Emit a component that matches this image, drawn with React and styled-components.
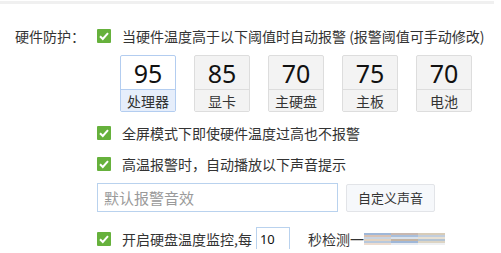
import React from 'react'
import styled, { createGlobalStyle } from 'styled-components'

const GlobalStyle = createGlobalStyle`
    body {
        margin: 0;
        background: #ffffff;
        font-family: "Noto Sans CJK SC", "Noto Sans", sans-serif;
        font-size: 14px;
        color: #333333;
    }
`

const thresholds = [
    { value: 95, name: '处理器', active: true },
    { value: 85, name: '显卡' },
    { value: 70, name: '主硬盘' },
    { value: 75, name: '主板' },
    { value: 70, name: '电池' },
]

const stripes = [
    ['#9fb7d8', '#d8c2b4', '#c9d4e2', '#e2d2c0', '#b8c8dc', '#ecdcd0'],
    ['#c8b8b0', '#a9bfdc', '#d9e2ec', '#c4b4a4', '#9fb7d8', '#e5e9ef'],
    ['#d8ccb8', '#c2cedd', '#e8e0d2', '#b4c4d4', '#dcd4c4', '#eef0f2'],
]

const stripeBackground = colors =>
    `linear-gradient(to bottom, ${colors.map((c, i) => `${c} ${i * 2}px ${i * 2 + 2}px`).join(', ')})`

const Check = () => (
    <CheckBox>
        <svg width="14" height="14" viewBox="0 0 14 14">
            <rect width="14" height="14" rx="1" fill="#66b13c" />
            <path d="M3 7.2 L5.8 10 L11 4.2" fill="none" stroke="#fff" strokeWidth="2" />
        </svg>
    </CheckBox>
)

const App = () => (
    <>
        <GlobalStyle />
        <TopStrip />
        <Section>
            <Label>硬件防护：</Label>
            <Content>
                <CheckRow>
                    <Check />
                    <span>当硬件温度高于以下阈值时自动报警 (报警阈值可手动修改)</span>
                </CheckRow>
                <Boxes>
                    {thresholds.map(t => (
                        <Box key={t.name} active={t.active}>
                            <BoxValue active={t.active}>{t.value}</BoxValue>
                            <BoxName active={t.active}>{t.name}</BoxName>
                        </Box>
                    ))}
                </Boxes>
                <CheckRow gap={11}>
                    <Check />
                    <span>全屏模式下即使硬件温度过高也不报警</span>
                </CheckRow>
                <CheckRow gap={11}>
                    <Check />
                    <span>高温报警时，自动播放以下声音提示</span>
                </CheckRow>
                <SoundRow>
                    <SoundInput>默认报警音效</SoundInput>
                    <Button>自定义声音</Button>
                </SoundRow>
                <CheckRow gap={17}>
                    <Check />
                    <span>开启硬盘温度监控,每</span>
                    <SmallInput>10</SmallInput>
                    <After>秒检测一</After>
                    <Garble>
                        {stripes.map((s, i) => (
                            <Stripe key={i} style={{ background: stripeBackground(s) }} />
                        ))}
                    </Garble>
                </CheckRow>
            </Content>
        </Section>
    </>
)

const TopStrip = styled.div`
    margin-top: 1px;
    width: 494px;
    height: 3px;
    background: #f0f0f0;
`

const Section = styled.div`
    display: flex;
    padding-left: 15px;
`

const Label = styled.div`
    width: 82px;
    margin-top: 22px;
    line-height: 20px;
    color: #333;
    white-space: nowrap;
`

const Content = styled.div`
    display: flex;
    flex-direction: column;
    padding-top: 22px;
`

const CheckRow = styled.div`
    display: flex;
    align-items: center;
    height: 20px;
    margin-top: ${props => props.gap || 0}px;
    white-space: nowrap;
`

const CheckBox = styled.span`
    display: flex;
    width: 14px;
    height: 14px;
    margin-right: 11px;
`

const Boxes = styled.div`
    display: flex;
    gap: 18px;
    margin: 9px 0 0 23px;
`

const Box = styled.div`
    width: 54px;
    height: 55px;
    border: 1px solid ${props => (props.active ? '#b3cdf0' : '#dddddd')};
    border-radius: 2px;
    display: grid;
    grid-template-rows: 34px 1fr;
    background: ${props => (props.active ? '#ffffff' : '#f3f3f3')};
`

const BoxValue = styled.div`
    display: flex;
    align-items: center;
    justify-content: center;
    font-family: "Noto Sans", sans-serif;
    font-size: 25px;
    color: #111;
    border-bottom: 1px solid ${props => (props.active ? '#b3cdf0' : '#dddddd')};
`

const BoxName = styled.div`
    display: flex;
    align-items: center;
    justify-content: center;
    font-size: 14px;
    color: #333;
    background: ${props => (props.active ? '#e6eefb' : '#f3f3f3')};
`

const SoundRow = styled.div`
    display: flex;
    align-items: center;
    gap: 8px;
    margin-top: 9px;
`

const SoundInput = styled.div`
    width: 233px;
    height: 27px;
    border: 1px solid #b9d2ee;
    padding-left: 6px;
    display: flex;
    align-items: center;
    color: #9a9a9a;
    font-size: 15px;
`

const Button = styled.div`
    width: 87px;
    height: 26px;
    border: 1px solid #e2e4e8;
    border-radius: 2px;
    background: #f6f8fb;
    display: flex;
    align-items: center;
    justify-content: center;
    font-size: 13px;
    color: #333;
`

const SmallInput = styled.div`
    width: 29px;
    height: 22px;
    margin-left: 4px;
    border: 1px solid #b9d2ee;
    display: flex;
    align-items: center;
    padding-left: 3px;
    font-family: "Noto Sans", sans-serif;
    font-size: 13px;
    color: #111;
`

const After = styled.span`
    margin-left: 18px;
`

const Garble = styled.div`
    display: flex;
    height: 12px;
`

const Stripe = styled.div`
    width: 27px;
    height: 12px;
`

export default App
